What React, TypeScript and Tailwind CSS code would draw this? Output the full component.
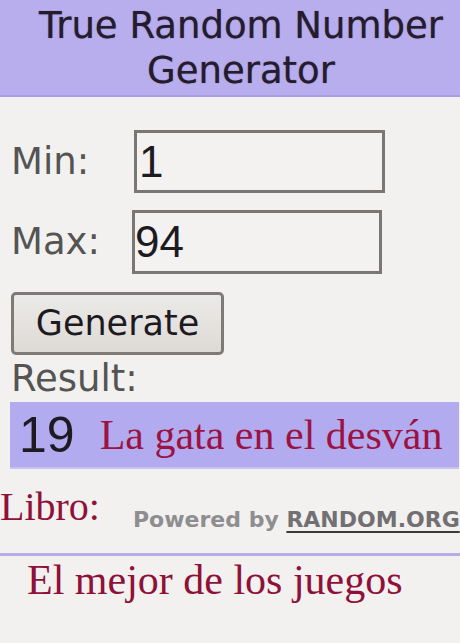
export default function App() {
  return (
    <div className="w-[460px] h-[643px] bg-[#f2f1ef] overflow-hidden relative">
      <div className="h-[97px] bg-[#b8aeee] border-b-2 border-[#a99ee2] flex flex-col items-center pt-[3px] text-[#251c2e] text-[37px] leading-[45px] [font-family:'DejaVu_Sans',sans-serif] [text-shadow:0_0_1px_rgba(40,20,50,0.6)]">
        <div className="pl-[22px] whitespace-nowrap">True Random Number</div>
        <div className="pl-[22px]">Generator</div>
      </div>
      <div className="[font-family:'DejaVu_Sans',sans-serif]">
        <div className="flex items-center mt-[33px] h-[63px]">
          <div className="w-[134px] pl-[11px] text-[37px] text-[#545454]">Min:</div>
          <div className="w-[251px] h-[63px] border-[3px] border-[#7b7774] bg-[#f3f2f0] flex items-center pl-[2px] text-[44px] text-[#1d1a22] [font-family:'Liberation_Sans',sans-serif]">1</div>
        </div>
        <div className="flex items-center mt-[17px] h-[64px]">
          <div className="w-[132px] pl-[11px] text-[37px] text-[#545454]">Max:</div>
          <div className="w-[250px] h-[64px] border-[3px] border-[#7b7774] bg-[#f3f2f0] flex items-center pl-[0px] text-[44px] text-[#1d1a22] [font-family:'Liberation_Sans',sans-serif]">94</div>
        </div>
        <div className="mt-[18px] ml-[11px] w-[213px] h-[63px] border-[3px] border-[#7e7a76] rounded-[5px] bg-gradient-to-b from-[#eceae8] to-[#dddad6] flex items-center justify-center text-[35px] text-[#1d1a22]">
          Generate
        </div>
        <div className="pl-[11px] h-[47px] text-[37px] leading-[47px] text-[#545454]">Result:</div>
        <div className="ml-[10px] w-[449px] h-[67px] bg-[#b3abf0] border-b-2 border-[#c9c3f2] flex items-center overflow-hidden">
          <span className="pl-[9px] text-[50px] leading-none text-[#1d1a22] [font-family:'Liberation_Sans',sans-serif]">19</span>
          <span className="pl-[25px] text-[42px] leading-none whitespace-nowrap text-[#9c1343] [font-family:'Liberation_Serif',serif]">La gata en el desván</span>
        </div>
      </div>
      <div className="flex items-start h-[84px] pt-[18px]">
        <span className="text-[40px] leading-[40px] text-[#8f1038] [font-family:'Liberation_Serif',serif]">Libro:</span>
        <span className="ml-[33px] mt-[22px] whitespace-nowrap text-[22px] leading-[22px] font-bold text-[#8e8e90] [font-family:'DejaVu_Sans',sans-serif]">
          Powered by <span className="text-[#727072] underline decoration-[#3a3a3a] decoration-2 underline-offset-4">RANDOM.ORG</span>
        </span>
      </div>
      <div className="h-[3px] bg-[#b6aee8]"></div>
      <div className="pl-[27px] pt-[3px] text-[42px] leading-[42px] text-[#8f1038] whitespace-nowrap [font-family:'Liberation_Serif',serif]">El mejor de los juegos</div>
    </div>
  );
}
